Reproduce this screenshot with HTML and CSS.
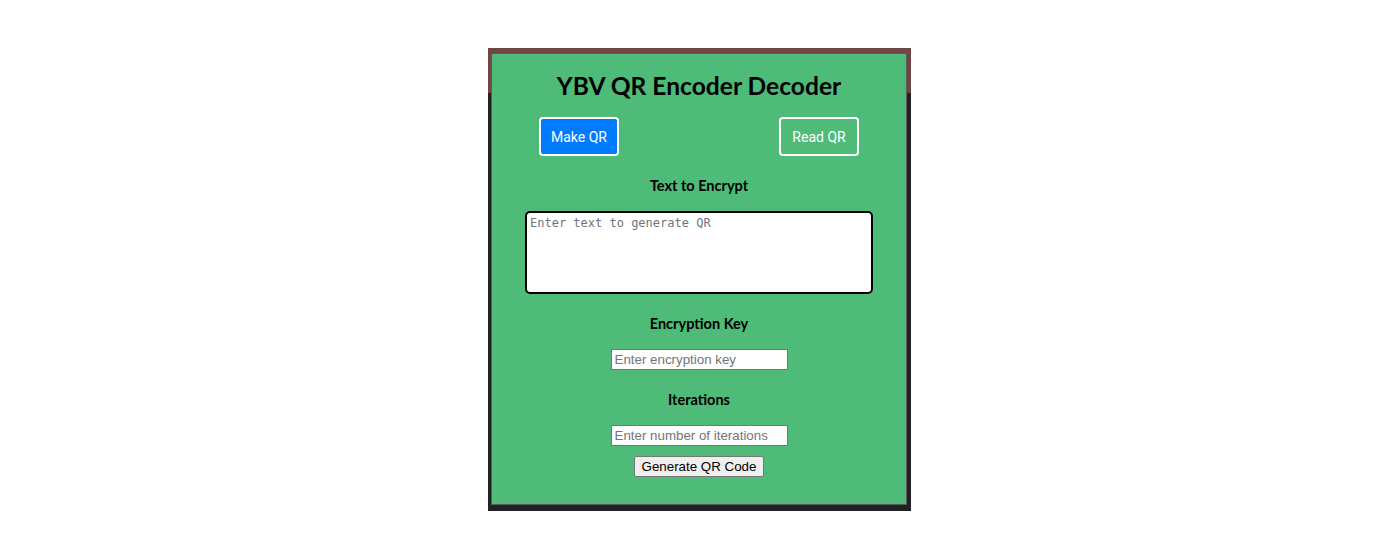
FILE: index.html
```html
<!DOCTYPE html>
<html lang="en">
<head>
<meta charset="utf-8">
<title>YBV QR Encoder Decoder</title>
<link rel="stylesheet" href="styles.css">
</head>
<body>
<div class="frame">
  <div class="panel">
    <h1 class="title">YBV QR Encoder Decoder</h1>
    <div class="tabs">
      <button class="tab tab-active">Make QR</button>
      <button class="tab">Read QR</button>
    </div>
    <label class="label label-first">Text to Encrypt</label>
    <textarea class="text-input" placeholder="Enter text to generate QR"></textarea>
    <label class="label">Encryption Key</label>
    <input class="field" type="text" placeholder="Enter encryption key">
    <label class="label">Iterations</label>
    <input class="field" type="text" placeholder="Enter number of iterations">
    <button class="generate">Generate QR Code</button>
  </div>
</div>
</body>
</html>
```

FILE: styles.css
```css
html, body {
  margin: 0;
  padding: 0;
  background: #ffffff;
}

.frame {
  width: 423px;
  height: 463px;
  margin: 48px 0 0 calc(50% - 212px);
  box-sizing: border-box;
  padding: 5px 4px 6px 3px;
  background: linear-gradient(to bottom, #6f4641 0, #6f4641 45px, #202124 45px, #202124 100%);
}

.panel {
  height: 100%;
  box-sizing: border-box;
  background: #4fbb79;
  border: 1px solid #5b5b5b;
  display: flex;
  flex-direction: column;
  align-items: center;
  padding-top: 16px;
}

.title {
  margin: 0;
  font-family: Lato, "Open Sans", sans-serif;
  font-weight: 700;
  font-size: 24.6px;
  line-height: 32px;
  color: #000;
}

.tabs {
  align-self: stretch;
  display: flex;
  justify-content: space-between;
  padding: 0 47px;
  margin-top: 15px;
}

.tab {
  width: 80px;
  height: 39px;
  box-sizing: border-box;
  border: 2px solid #ffffff;
  border-radius: 4px;
  background: transparent;
  color: #ffffff;
  font-family: Roboto, sans-serif;
  font-size: 14px;
  padding: 0;
}

.tab-active {
  background: #007bff;
}

.label {
  display: block;
  font-family: Lato, "Open Sans", sans-serif;
  font-weight: 700;
  font-size: 14.5px;
  line-height: 20px;
  color: #000;
  margin-top: 20px;
}

.text-input {
  margin-top: 15px;
  width: 348px;
  height: 83px;
  box-sizing: border-box;
  border: 2px solid #000;
  border-radius: 5px;
  padding: 3px 3px;
  font-family: "DejaVu Sans Mono", monospace;
  font-size: 12px;
  resize: none;
  background: #fff;
}

.text-input::placeholder {
  color: #6f767d;
}

.field {
  margin-top: 15px;
  width: 177px;
  height: 21px;
  box-sizing: border-box;
  border: 1px solid #767676;
  padding: 1px 3px;
  font-family: "Liberation Sans", Arial, sans-serif;
  font-size: 13.333px;
  background: #fff;
}

.field::placeholder {
  color: #757575;
}

.generate {
  margin-top: 10px;
  width: 130px;
  height: 21px;
  box-sizing: border-box;
  border: 1px solid #767676;
  border-radius: 2px;
  background: #efefef;
  font-family: "Liberation Sans", Arial, sans-serif;
  font-size: 13.333px;
  color: #000;
  padding: 0;
}
```
